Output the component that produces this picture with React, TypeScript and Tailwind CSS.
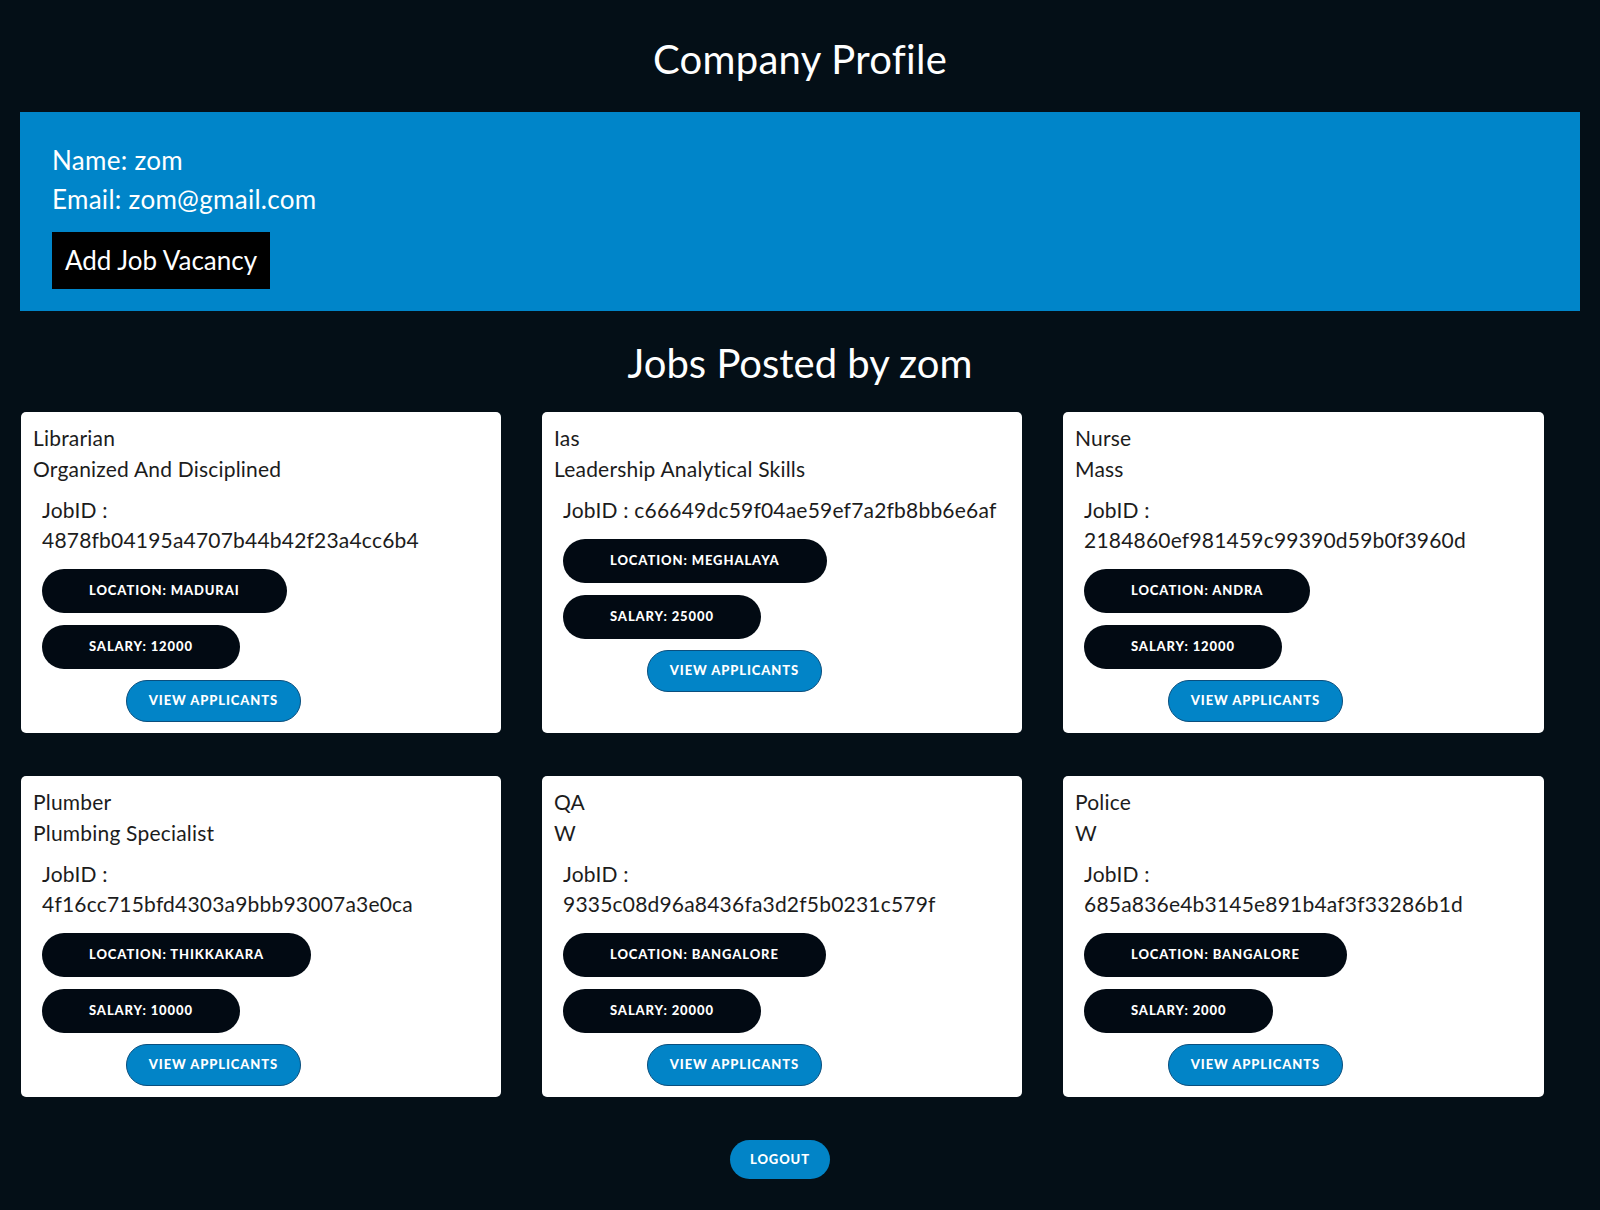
import React from 'react';

type Job = {
  id: string;
  title: string;
  skills: string;
  location: string;
  salary: string;
  wrapId: boolean;
};

const jobs: Job[] = [
  { id: '4878fb04195a4707b44b42f23a4cc6b4', title: 'Librarian', skills: 'Organized And Disciplined', location: 'Madurai', salary: '12000', wrapId: true },
  { id: 'c66649dc59f04ae59ef7a2fb8bb6e6af', title: 'Ias', skills: 'Leadership Analytical Skills', location: 'Meghalaya', salary: '25000', wrapId: false },
  { id: '2184860ef981459c99390d59b0f3960d', title: 'Nurse', skills: 'Mass', location: 'Andra', salary: '12000', wrapId: true },
  { id: '4f16cc715bfd4303a9bbb93007a3e0ca', title: 'Plumber', skills: 'Plumbing Specialist', location: 'Thikkakara', salary: '10000', wrapId: true },
  { id: '9335c08d96a8436fa3d2f5b0231c579f', title: 'QA', skills: 'W', location: 'Bangalore', salary: '20000', wrapId: true },
  { id: '685a836e4b3145e891b4af3f33286b1d', title: 'Police', skills: 'W', location: 'Bangalore', salary: '2000', wrapId: true },
];

const Pill: React.FC<{ children: React.ReactNode }> = ({ children }) => (
  <div className="flex h-[44px] w-fit items-center rounded-full bg-[#020a13] px-[47px] text-[13px] font-black uppercase tracking-[0.9px] text-white">
    {children}
  </div>
);

const JobCard: React.FC<{ job: Job }> = ({ job }) => (
  <div className="rounded-[5px] bg-white px-[12px] pb-[11px] pt-[10px] text-[21px] tracking-[0.2px] text-[#1c1c1c]">
    <p className="leading-[31px]">{job.title}</p>
    <p className="leading-[31px]">{job.skills}</p>
    <div className="ml-[9px] mt-[11px]">
      {job.wrapId ? (
        <>
          <p className="leading-[30px]">JobID :</p>
          <p className="leading-[30px]">{job.id}</p>
        </>
      ) : (
        <p className="whitespace-nowrap leading-[30px]">JobID : {job.id}</p>
      )}
      <div className="mt-[14px] flex flex-col gap-[12px]">
        <Pill>Location: {job.location}</Pill>
        <Pill>Salary: {job.salary}</Pill>
      </div>
      <button className="ml-[84px] mt-[11px] flex h-[42px] w-[175px] items-center justify-center rounded-full border border-[#0a4f7e] bg-[#0284c7] text-[13px] font-black uppercase tracking-[0.9px] text-white">
        View Applicants
      </button>
    </div>
  </div>
);

export default function App() {
  return (
    <div className="min-h-[1210px] bg-[#040f17] pb-[32px] font-['Lato','Liberation_Sans',sans-serif]">
      <h1 className="pt-[36px] text-center text-[40px] leading-[46px] tracking-[0.3px] text-white">Company Profile</h1>

      <section className="mx-[20px] mt-[30px] bg-[#0085c9] px-[32px] pb-[22px] pt-[29px] text-[26px] leading-[39px] tracking-[0.3px] text-white">
        <p>Name: zom</p>
        <p>Email: zom@gmail.com</p>
        <button className="mt-[13px] flex h-[57px] w-[218px] items-center justify-center bg-black text-[26px] tracking-normal text-white">
          Add Job Vacancy
        </button>
      </section>

      <h2 className="mt-[28px] text-center text-[40px] leading-[48px] text-white">Jobs Posted by zom</h2>

      <div className="ml-[21px] mt-[25px] grid grid-cols-[480px_480px_481px] gap-x-[41px] gap-y-[43px]">
        {jobs.map((job) => (
          <JobCard key={job.id} job={job} />
        ))}
      </div>

      <div className="mt-[43px] flex w-[1560px] justify-center">
        <button className="flex h-[39px] w-[100px] items-center justify-center rounded-full bg-[#0284c7] text-[13px] font-black uppercase tracking-[0.9px] text-white">
          Logout
        </button>
      </div>
    </div>
  );
}
